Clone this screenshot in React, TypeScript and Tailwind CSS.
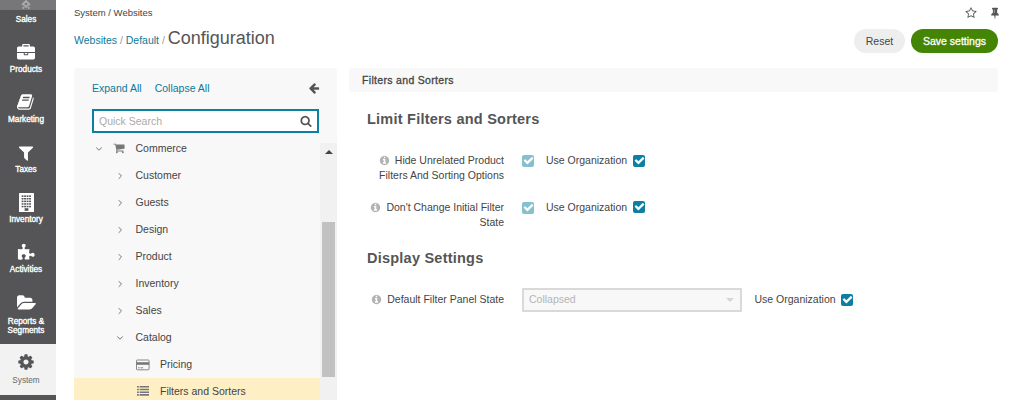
import React from "react";

const P = {
  briefcase:
    "M640 256h512v-128h-512v128zm1152 640v480q0 66-47 113t-113 47h-1472q-66 0-113-47t-47-113v-480h672v160q0 26 19 45t45 19h320q26 0 45-19t19-45v-160h672zm-768 0v128h-256v-128h256zm768-480v384h-1792v-384q0-66 47-113t113-47h352v-160q0-40 28-68t68-28h576q40 0 68 28t28 68v160h352q66 0 113 47t47 113z",
  book: "M1639 478q40 57 18 129l-275 906q-19 64-76.5 107.5t-122.5 43.5h-923q-77 0-148.5-53.5t-99.5-131.5q-24-67-2-127 0-4 3-27t4-37q1-8-3-21.5t-3-19.5q2-11 8-21t16.5-23.5 16.5-23.5q23-38 45-91.5t30-91.5q3-10 .5-30t-.5-28q3-11 17-28t17-23q21-36 42-92t25-90q1-9-2.5-32t.5-28q4-13 22-30.5t22-22.5q19-26 42.5-84.5t27.5-96.5q1-8-3-25.5t-2-26.5q2-8 9-18t18-23 17-21q8-12 16.5-30.5t15-35 16-36 19.5-32 26.5-23.5 36-11.5 47.5 5.5l-1 3q38-9 51-9h761q74 0 114 56t18 130l-274 906q-36 119-71.5 153.5t-128.5 34.5h-869q-27 0-38 15-11 16-1 43 24 70 144 70h923q29 0 56-15.5t35-41.5l300-987q7-22 5-57 38 15 59 43zm-1064 2q-4 13 2 22.5t20 9.5h608q13 0 25.5-9.5t16.5-22.5l21-64q4-13-2-22.5t-20-9.5h-608q-13 0-25.5 9.5t-16.5 22.5zm-83 256q-4 13 2 22.5t20 9.5h608q13 0 25.5-9.5t16.5-22.5l21-64q4-13-2-22.5t-20-9.5h-608q-13 0-25.5 9.5t-16.5 22.5z",
  filter:
    "M1595 295q17 41-14 70l-493 493v742q0 42-39 59-13 5-25 5-27 0-45-19l-256-256q-19-19-19-45v-486l-493-493q-31-29-14-70 17-39 59-39h1280q42 0 59 39z",
  puzzle:
    "M1755 1083q0 81-44.5 135t-123.5 54q-41 0-77.5-17.5t-59-38-56.5-38-71-17.5q-110 0-110 124 0 39 16 115t15 115v5q-22 0-33 1-34 3-97.5 11.5t-115.5 13.5-98 5q-61 0-103-26.5t-42-83.5q0-37 17.5-71t38-56.5 38-59 17.5-77.5q0-79-54-123.5t-135-44.5q-84 0-143 45.5t-59 127.5q0 43 15 83t33.5 64.5 33.5 53 15 50.5q0 45-46 89-37 35-117 35-95 0-245-24-9-2-27.5-4t-27.5-4l-13-2q-1 0-3-1-2 0-2-1v-1024q2 1 17.5 3.5t34 5 21.5 3.5q150 24 245 24 80 0 117-35 46-44 46-89 0-22-15-50.5t-33.5-53-33.5-64.5-15-83q0-82 59-127.5t144-45.5q80 0 134 44.5t54 123.5q0 41-17.5 77.5t-38 59-38 56.5-17.5 71q0 57 42 83.5t103 26.5q64 0 180-15t163-17v2q-1 2-3.5 17.5t-5 34-3.5 21.5q-24 150-24 245 0 80 35 117 44 46 89 46 22 0 50.5-15t53-33.5 64.5-33.5 83-15q82 0 127.5 59t45.5 143z",
  folder:
    "M1879 952q0 31-31 66l-336 396q-43 51-120.5 86.5t-143.5 35.5h-1088q-34 0-60.5-13t-26.5-43q0-31 31-66l336-396q43-51 120.5-86.5t143.5-35.5h1088q34 0 60.5 13t26.5 43zm-343-344v160h-832q-94 0-197 47.5t-164 119.5l-337 396-5 6q0-4-.5-12.5t-.5-12.5v-960q0-92 66-158t158-66h320q92 0 158 66t66 158v32h544q92 0 158 66t66 158z",
  cog: "M1152 896q0-106-75-181t-181-75-181 75-75 181 75 181 181 75 181-75 75-181zm512-109v222q0 12-8 23t-20 13l-185 28q-19 54-39 91 35 50 107 138 10 12 10 25t-9 23q-27 37-99 108t-94 71q-12 0-26-9l-138-108q-44 23-91 38-16 136-29 186-7 28-36 28h-222q-14 0-24.5-8.5t-11.5-21.5l-28-184q-49-16-90-37l-141 107q-10 9-25 9-14 0-25-11-126-114-165-168-7-10-7-23 0-12 8-23 15-21 51-66.5t54-70.5q-27-50-41-99l-183-27q-13-2-21-12.5t-8-23.5v-222q0-12 8-23t19-13l186-28q14-46 39-92-40-57-107-138-10-12-10-24 0-10 9-23 26-36 98.5-107.5t94.5-71.5q13 0 26 10l138 107q44-23 91-38 16-136 29-186 7-28 36-28h222q14 0 24.5 8.5t11.5 21.5l28 184q49 16 90 37l142-107q9-9 24-9 13 0 25 10 129 119 165 170 7 8 7 22 0 12-8 23-15 21-51 66.5t-54 70.5q26 50 41 98l183 28q13 2 21 12.5t8 23.5z",
  cart: "M704 1536q0 52-38 90t-90 38-90-38-38-90 38-90 90-38 90 38 38 90zm896 0q0 52-38 90t-90 38-90-38-38-90 38-90 90-38 90 38 38 90zm128-1088v512q0 24-16.5 42.5t-40.5 21.5l-1044 122q13 60 13 70 0 16-24 64h920q26 0 45 19t19 45-19 45-45 19h-1024q-26 0-45-19t-19-45q0-11 8-31.5t16-36 21.5-40 15.5-29.5l-177-823h-204q-26 0-45-19t-19-45 19-45 45-19h256q16 0 28.5 6.5t19.5 15.5 13 24.5 8 26 5.5 29.5 4.5 26h1201q26 0 45 19t19 45z",
  search:
    "M1216 832q0-185-131.5-316.5t-316.5-131.5-316.5 131.5-131.5 316.5 131.5 316.5 316.5 131.5 316.5-131.5 131.5-316.5zm512 832q0 52-38 90t-90 38q-54 0-90-38l-343-342q-179 124-399 124-143 0-273.5-55.5t-225-150-150-225-55.5-273.5 55.5-273.5 150-225 225-150 273.5-55.5 273.5 55.5 225 150 150 225 55.5 273.5q0 220-124 399l343 343q37 37 37 90z",
  arrow:
    "M1664 896v128q0 53-32.5 90.5t-84.5 37.5h-704l293 294q38 36 38 90t-38 90l-75 76q-37 37-90 37-52 0-91-37l-651-652q-37-37-37-90 0-52 37-91l651-650q38-38 91-38 52 0 90 38l75 74q38 38 38 91t-38 91l-293 293h704q52 0 84.5 37.5t32.5 90.5z",
  info: "M1152 1376v-160q0-14-9-23t-23-9h-96v-512q0-14-9-23t-23-9h-320q-14 0-23 9t-9 23v160q0 14 9 23t23 9h96v320h-96q-14 0-23 9t-9 23v160q0 14 9 23t23 9h448q14 0 23-9t9-23zm-128-896v-160q0-14-9-23t-23-9h-192q-14 0-23 9t-9 23v160q0 14 9 23t23 9h192q14 0 23-9t9-23zm640 416q0 209-103 385.5t-279.5 279.5-385.5 103-385.5-103-279.5-279.5-103-385.5 103-385.5 279.5-279.5 385.5-103 385.5 103 279.5 279.5 103 385.5z",
  star: "M1201 1004l306-297-422-62-189-382-189 382-422 62 306 297-73 421 378-199 377 199zm527-357q0 22-26 48l-363 354 86 500q1 7 1 20 0 50-41 50-19 0-40-12l-449-236-449 236q-22 12-40 12-21 0-31.5-14.5t-10.5-35.5q0-6 2-20l86-500-364-354q-25-27-25-48 0-37 56-46l502-73 225-455q19-41 49-41t49 41l225 455 502 73q56 9 56 46z",
  pin: "M800 864v-448q0-14-9-23t-23-9-23 9-9 23v448q0 14 9 23t23 9 23-9 9-23zm672 352q0 26-19 45t-45 19h-429l-51 483q-2 12-10.5 20.5t-20.5 8.5h-1q-27 0-32-27l-76-485h-404q-26 0-45-19t-19-45q0-123 78.5-221.5t177.5-98.5v-512q-52 0-90-38t-38-90 38-90 90-38h640q52 0 90 38t38 90-38 90-90 38v512q99 0 177.5 98.5t78.5 221.5z",
  check:
    "M1671 566q0 40-28 68l-724 724-136 136q-28 28-68 28t-68-28l-136-136-362-362q-28-28-28-68t28-68l136-136q28-28 68-28t68 28l294 295 656-657q28-28 68-28t68 28l136 136q28 28 28 68z",
};

function Icon({ d, className }: { d: string; className: string }) {
  return (
    <svg viewBox="0 0 1792 1792" fill="currentColor" className={`shrink-0 overflow-visible ${className}`}>
      <path d={d} />
    </svg>
  );
}

function Building() {
  const rows = [2.4, 5, 7.6, 10.2, 12.8];
  const cols = [2.6, 5.1, 7.6, 10.1];
  return (
    <svg viewBox="0 0 15 19" className="mt-[-1px] h-[19px] w-[15px]" fill="#fff">
      <rect width="15" height="19" rx="0.6" />
      {rows.map((y) => cols.map((x) => <rect key={`${x}-${y}`} x={x} y={y} width="1.9" height="1.5" fill="#555557" />))}
      <rect x="5.6" y="15.2" width="3.8" height="2.6" fill="#555557" />
    </svg>
  );
}

function NavItem({ label, children, tall }: { label: React.ReactNode; children: React.ReactNode; tall?: boolean }) {
  return (
    <div className={`flex shrink-0 flex-col items-center pt-2 text-center text-[8.2px] leading-[10px] text-white [-webkit-text-stroke:0.35px_white] ${tall ? "h-[58px]" : "h-[50px]"}`}>
      <div className="flex h-5 justify-center">{children}</div>
      <div className={tall ? "mt-[3px] leading-[9px]" : "mt-px"}>{label}</div>
    </div>
  );
}

function Chevron({ open }: { open?: boolean }) {
  return (
    <svg viewBox="0 0 8 8" className="h-2 w-2 shrink-0" fill="none" stroke="#777" strokeWidth="1">
      <path d={open ? "M1.2 2.5 4 5.2 6.8 2.5" : "M2.7 1.2 5.5 4 2.7 6.8"} />
    </svg>
  );
}

function Check({ faded }: { faded?: boolean }) {
  return (
    <span className={`flex h-3 w-3 shrink-0 items-center justify-center rounded-[2px] text-white ${faded ? "bg-[#86bfd0]" : "-mt-px bg-[#0c7fa2]"}`}>
      <Icon d={P.check} className="-mt-px h-[11px] w-[11px]" />
    </span>
  );
}

function Row({ lines, children, className }: { lines: string[]; children: React.ReactNode; className: string }) {
  return (
    <div className={`flex items-start ${className}`}>
      <div className="w-[155px] shrink-0 text-right leading-[15px]">
        <div className="flex items-center justify-end">
          <Icon d={P.info} className="mr-[5px] h-[11px] w-[11px] text-[#b3b3b3]" />
          {lines[0]}
        </div>
        {lines[1] && <div>{lines[1]}</div>}
      </div>
      {children}
    </div>
  );
}

const groups = ["Customer", "Guests", "Design", "Product", "Inventory", "Sales"];

export default function App() {
  return (
    <div className="flex h-[400px] w-[1010px] overflow-hidden bg-white font-['Liberation_Sans',Arial,sans-serif] text-[10.5px] text-[#444]">
      <nav className="flex w-14 shrink-0 flex-col bg-[#555557]">
        <div className="flex h-[10px] shrink-0 justify-center bg-[#777779] pr-1">
          <svg viewBox="0 0 10 10" className="h-[10px] w-[10px]" fill="none" stroke="#aaa" strokeWidth="1.8">
            <path d="M1 4.8 5 1 9 4.8M1.6 8.6 3 7.2M8.4 8.6 7 7.2M2.4 4.2 5 7 7.6 4.2" />
          </svg>
        </div>
        <div className="h-[26px] shrink-0 pt-[5px] text-center text-[8.2px] leading-[10px] text-white [-webkit-text-stroke:0.35px_white]"><span className="relative right-[2px]">Sales</span></div>
        <div className="flex flex-col pr-1">
          <NavItem label="Products"><Icon d={P.briefcase} className="h-[18px] w-[18px]" /></NavItem>
          <NavItem label="Marketing"><Icon d={P.book} className="mt-[-1px] h-[18px] w-[18px]" /></NavItem>
          <NavItem label="Taxes"><Icon d={P.filter} className="h-[18px] w-[18px]" /></NavItem>
          <NavItem label="Inventory"><Building /></NavItem>
          <NavItem label="Activities"><Icon d={P.puzzle} className="h-[18px] w-[18px]" /></NavItem>
          <NavItem tall label={<>Reports &amp;<br />Segments</>}><Icon d={P.folder} className="h-[18px] w-[18px]" /></NavItem>
        </div>
        <div className="flex h-[51px] shrink-0 flex-col items-center bg-[#f2f2f2] pr-1 pt-[9px] text-[8.2px] leading-[10px] text-[#666]">
          <Icon d={P.cog} className="h-[18px] w-[18px] text-[#555557]" />
          <div className="mt-[5px]">System</div>
        </div>
      </nav>

      <main className="min-w-0 flex-1 pl-[18px] pr-3">
        <div className="flex h-[26px] items-center justify-between text-[9.5px]">
          <span>System / Websites</span>
          <div className="flex items-center gap-3 text-[#555]">
            <Icon d={P.star} className="h-3 w-3" />
            <Icon d={P.pin} className="mr-[-3px] h-3 w-3" />
          </div>
        </div>
        <header className="flex h-[42px] items-start justify-between">
          <div className="-mt-px flex h-[26px] items-baseline whitespace-pre text-[#0c7a9c]">
            Websites<span className="text-[#999]"> / </span>Default<span className="text-[#999]"> / </span>
            <h1 className="text-[18px] leading-[26px] text-[#555]">Configuration</h1>
          </div>
          <div className="flex gap-[6px] pt-[3px]">
            <button className="h-6 w-[51px] rounded-full bg-[#eee] pt-px">Reset</button>
            <button className="h-6 w-[87px] rounded-full bg-[#458506] pt-px text-white [-webkit-text-stroke:0.3px_white]">Save settings</button>
          </div>
        </header>

        <div className="flex h-[332px] gap-3">
          <aside className="flex w-[263px] shrink-0 flex-col rounded-t-[3px] bg-[#f8f8f8]">
            <div className="flex h-[41px] items-center gap-[13px] pl-[18px] pr-[17px] text-[#0c7a9c]">
              <span>Expand All</span>
              <span>Collapse All</span>
              <Icon d={P.arrow} className="ml-auto mt-[-2px] h-3 w-3 text-[#555]" />
            </div>
            <div className="mx-[18px] flex h-6 w-[227px] shrink-0 items-center justify-between border-2 border-[#0c7fa2] bg-white pl-[5px] pr-[5px] text-[#aaa]">
              <span className="pt-px">Quick Search</span>
              <Icon d={P.search} className="h-3 w-3 text-[#555]" />
            </div>
            <div className="flex min-h-0 flex-1 overflow-hidden pt-[2px]">
              <div className="w-[246px] shrink-0">
                <div className="flex h-[27px] items-center pl-[21px]">
                  <Chevron open />
                  <Icon d={P.cart} className="ml-[10px] mr-[10.5px] mt-[-2px] h-3 w-3 text-[#777]" />
                  Commerce
                </div>
                {groups.map((g) => (
                  <div key={g} className="flex h-[27px] items-center gap-[11.5px] pl-[42px]">
                    <Chevron />
                    {g}
                  </div>
                ))}
                <div className="flex h-[27px] items-center gap-[11.5px] pl-[42px]">
                  <Chevron open />
                  Catalog
                </div>
                <div className="flex h-[27px] items-center gap-[10px] pl-[62px]">
                  <svg viewBox="0 0 14 12" className="h-3 w-[14px]" fill="none">
                    <rect x="0.5" y="1" width="12.6" height="9.8" rx="0.8" stroke="#888" />
                    <path d="M0.5 3.2h12.6v2.6H.5z" fill="#777" />
                    <path d="M2 8.8h1.6M4.4 8.8h2.8" stroke="#888" />
                  </svg>
                  Pricing
                </div>
                <div className="flex h-[27px] items-center gap-[11px] bg-[#ffefc5] pl-[63px]">
                  <svg viewBox="0 0 12 10" className="mt-[-2px] h-[10px] w-3" fill="#777">
                    <path d="M0 0h1.8v1.6H0zM2.6 0H12v1.6H2.6zM0 2.7h1.8v1.6H0zM2.6 2.7H12v1.6H2.6zM0 5.4h1.8V7H0zM2.6 5.4H12V7H2.6zM0 8.1h1.8v1.6H0zM2.6 8.1H12v1.6H2.6z" />
                  </svg>
                  Filters and Sorters
                </div>
              </div>
              <div className="mt-2 flex w-[17px] shrink-0 flex-col items-center bg-[#f1f1f1]">
                <svg viewBox="0 0 8 4" className="mt-[7px] h-1 w-2" fill="#444"><path d="M0 4 4 0l4 4z" /></svg>
                <div className="mr-[1px] mt-[68px] h-[155px] w-[13px] bg-[#c1c1c1]" />
              </div>
            </div>
          </aside>

          <section className="min-w-0 flex-1">
            <div className="flex h-6 items-center rounded-[3px] bg-[#f8f8f8] pl-[13px] pt-px tracking-[0.32px] [-webkit-text-stroke:0.3px_#444]">Filters and Sorters</div>
            <h2 className="ml-[18px] mt-[17px] text-[14.5px] font-bold leading-5 tracking-[0.23px] text-[#555]">Limit Filters and Sorters</h2>
            <Row className="mt-[24px]" lines={["Hide Unrelated Product", "Filters And Sorting Options"]}>
              <div className="ml-[18px] flex h-4 items-center">
                <Check faded />
                <span className="ml-3 mr-[6px]">Use Organization</span>
                <Check />
              </div>
            </Row>
            <Row className="mt-[17px]" lines={["Don't Change Initial Filter", "State"]}>
              <div className="ml-[18px] flex h-[15px] items-center">
                <Check faded />
                <span className="ml-3 mr-[6px]">Use Organization</span>
                <Check />
              </div>
            </Row>
            <h2 className="ml-[18px] mt-[18px] text-[14.5px] font-bold leading-5 tracking-[0.23px] text-[#555]">Display Settings</h2>
            <Row className="mt-[24px]" lines={["Default Filter Panel State"]}>
              <div className="-mt-1 ml-[18px] flex h-6 items-center">
                <div className="flex h-6 w-[220px] items-center justify-between rounded-[1px] border-2 border-[#d9d9d9] bg-[#f8f8f8] pl-[5px] pr-[6px] text-[#b5b5b5]">
                  Collapsed
                  <svg viewBox="0 0 8 4" className="h-1 w-2" fill="#d5d5d5"><path d="M0 0h8L4 4z" /></svg>
                </div>
                <span className="ml-[12.5px] mr-[5.5px]">Use Organization</span>
                <Check />
              </div>
            </Row>
          </section>
        </div>
      </main>
    </div>
  );
}
